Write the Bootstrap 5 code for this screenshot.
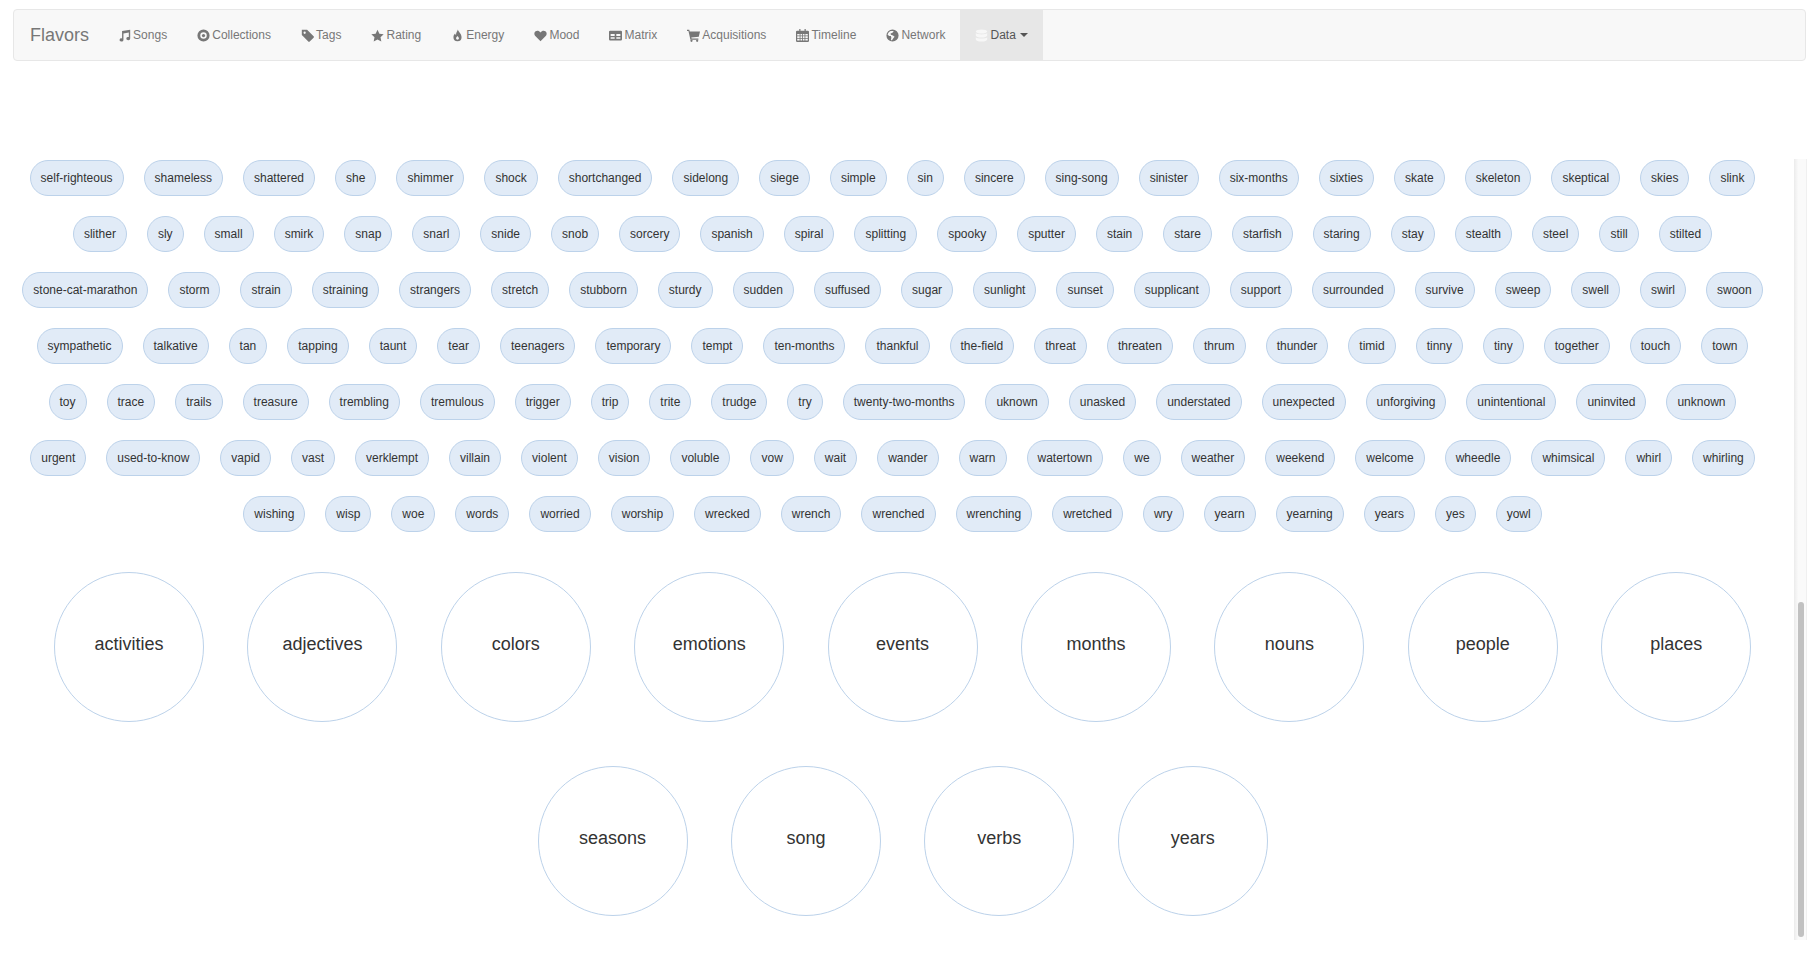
<!DOCTYPE html>
<html lang="en">
<head>
  <meta charset="UTF-8">
  <title>Flavors</title>
  <link href="https://cdn.jsdelivr.net/npm/bootstrap@5.3.3/dist/css/bootstrap.min.css" rel="stylesheet">
  <style>
    html, body {
      height: 100%;
      overflow: hidden;
    }
    body {
      background: #fff;
      color: #333;
      font-family: "Liberation Sans", Arial, sans-serif;
      font-size: 12px;
    }
    .top-bar {
      --bs-navbar-nav-link-padding-x: 15px;
      height: 52px;
      margin: 9px 9px 0 13px;
      padding: 0;
      background: #f8f8f8;
      border: 1px solid #e7e7e7;
      border-radius: 4px;
    }
    .top-bar .navbar-brand {
      color: #777;
      font-size: 18px;
      line-height: 20px;
      margin: 0;
      padding: 15px 14px 15px 16px;
    }
    .top-bar .nav-link {
      color: #777;
      font-size: 12px;
      line-height: 20px;
      padding-top: 15px;
      padding-bottom: 15px;
      display: flex;
      align-items: center;
      height: 50px;
    }
    .top-bar .nav-link svg {
      width: 13px;
      height: 13px;
      margin-right: 2.1px;
      fill: currentColor;
    }
    .top-bar .nav-link.open-item {
      background: #e7e7e7;
      color: #555;
    }
    .top-bar .nav-link.open-item svg {
      fill: #f7f7f7;
    }
    .top-bar .dropdown-toggle::after {
      margin-left: 4px;
      border-top-width: 4px;
      border-left-width: 4px;
      border-right-width: 4px;
      vertical-align: middle;
    }
    .scroll-pane {
      height: 781px;
      margin: 98px 8px 0 0;
    }
    .pane-body {
      overflow: hidden;
    }
    .pill-cloud {
      width: 1761px;
      margin: 1px 0 0 12px;
      column-gap: 20px;
      row-gap: 20px;
    }
    .flavor-pill {
      height: 36px;
      padding: 0 10px;
      line-height: 34px;
      background: #e1ebf7;
      border: 1px solid #bcd2ea;
      border-radius: 18px;
      white-space: nowrap;
    }
    .group-cloud {
      margin: 40px 0 0 11px;
      column-gap: 43.4px;
      row-gap: 44px;
    }
    .group-circle {
      width: 150px;
      height: 150px;
      padding-bottom: 5px;
      border: 1px solid #bcd2ea;
      border-radius: 50%;
      font-size: 18px;
    }
    .scroll-track {
      width: 15px;
      padding: 0 2px 3px 3px;
      background: linear-gradient(90deg, #efefef, #fafafa 30%, #fafafa);
      border-left: 1px solid #ededed;
      border-right: 1px solid #f0f0f0;
    }
    .scroll-thumb {
      height: 335px;
      background: #c1c1c1;
      border-radius: 4px;
    }
  </style>
</head>
<body>
<nav class="navbar navbar-expand top-bar">
  <a class="navbar-brand" href="#">Flavors</a>
  <ul class="navbar-nav">
    <li class="nav-item"><a class="nav-link" href="#"><svg viewBox="0 0 16 16"><path d="M5 2.600 15 .8v11a2.400 2 0 1 1-1.700-1.900V4.300L6.700 5.500V13.500a2.400 2 0 1 1-1.700-1.900Z"/></svg>Songs</a></li>
    <li class="nav-item"><a class="nav-link" href="#"><svg viewBox="0 0 16 16"><path fill-rule="evenodd" d="M8 .5a7.500 7.500 0 1 1 0 15 7.500 7.500 0 0 1 0-15ZM8 4a4 4 0 1 0 0 8 4 4 0 0 0 0-8Z"/><circle cx="8" cy="8" r="2"/></svg>Collections</a></li>
    <li class="nav-item"><a class="nav-link" href="#"><svg viewBox="0 0 16 16"><path fill-rule="evenodd" d="M1 1h6.500L15.500 9a1.200 1.200 0 0 1 0 1.700L10.700 15.500a1.200 1.200 0 0 1-1.700 0L1 7.500ZM4.500 3.200a1.400 1.400 0 1 0 0 2.800 1.400 1.400 0 0 0 0-2.800Z"/></svg>Tags</a></li>
    <li class="nav-item"><a class="nav-link" href="#"><svg viewBox="0 0 16 16"><path d="m8 .8 2.300 4.900 5.300.7-3.900 3.700 1 5.300L8 12.900l-4.700 2.500 1-5.300L.4 6.400l5.300-.7Z"/></svg>Rating</a></li>
    <li class="nav-item"><a class="nav-link" href="#"><svg viewBox="0 0 16 16"><path fill-rule="evenodd" d="M8.500.5c.6 3 4.500 5 4.500 9.500a5 5 0 0 1-10 0c0-2 1-3.200 2-4.500.2 1 .6 1.600 1.200 2C6 5 7.500 3 8.500.5ZM8 8.500c-.5 1-1.800 1.600-1.800 3a1.800 1.800 0 0 0 3.600 0c0-1.400-1.300-2-1.800-3Z"/></svg>Energy</a></li>
    <li class="nav-item"><a class="nav-link" href="#"><svg viewBox="0 0 16 16"><path d="M8 15 1.600 8.600C-.2 6.800.2 3.900 2 2.700c1.900-1.200 4.300-.7 6 1.500 1.700-2.200 4.100-2.700 6-1.500 1.800 1.200 2.200 4.100.4 5.900Z"/></svg>Mood</a></li>
    <li class="nav-item"><a class="nav-link" href="#"><svg viewBox="0 0 16 16"><path fill-rule="evenodd" d="M1.500 2h13A1.500 1.500 0 0 1 16 3.500v9a1.500 1.500 0 0 1-1.500 1.500h-13A1.500 1.500 0 0 1 0 12.500v-9A1.500 1.500 0 0 1 1.500 2ZM2 6v2.500h5V6Zm7 0v2.500h5V6ZM2 10v2h5v-2Zm7 0v2h5v-2Z"/></svg>Matrix</a></li>
    <li class="nav-item"><a class="nav-link" href="#"><svg viewBox="0 0 16 16"><path d="M0 1h2.800l.5 2H16l-1.500 6.500-9.200 1 .3 1.300H14v1.400H4.200L1.800 2.400H0Z"/><circle cx="5.500" cy="14.500" r="1.400"/><circle cx="12.500" cy="14.500" r="1.400"/></svg>Acquisitions</a></li>
    <li class="nav-item"><a class="nav-link" href="#"><svg viewBox="0 0 16 16"><path fill-rule="evenodd" d="M4 0h1.500v2h5V0H12v2h2.500A1.500 1.500 0 0 1 16 3.500v11a1.500 1.500 0 0 1-1.500 1.500h-13A1.500 1.500 0 0 1 0 14.500v-11A1.500 1.500 0 0 1 1.500 2H4ZM1.500 6v2h3V6Zm4 0v2h2V6Zm3 0v2h2V6Zm3 0v2h3V6Zm-10 3v2h3V9Zm4 0v2h2V9Zm3 0v2h2V9Zm3 0v2h3V9Zm-10 3v2h3v-2Zm4 0v2h2v-2Zm3 0v2h2v-2Zm3 0v2h3v-2Z"/></svg>Timeline</a></li>
    <li class="nav-item"><a class="nav-link" href="#"><svg viewBox="0 0 16 16"><path fill-rule="evenodd" d="M8 .5a7.500 7.500 0 1 1 0 15 7.500 7.500 0 0 1 0-15ZM5 2.800C3.400 3.700 2.300 5.300 2 7.200l2 1.300 2 .2.600 2-.6 2.500 1.200.8 2-3 1.400-1.500-2-1.500L6 7l-.4-1.500L8 4.500 9.500 2.600C8 2.200 6.300 2.200 5 2.800Z"/></svg>Network</a></li>
    <li class="nav-item"><a class="nav-link open-item dropdown-toggle" href="#"><svg viewBox="0 0 16 16"><path d="M8 .5c3.900 0 7 1 7 2.500S11.900 5.500 8 5.500 1 4.500 1 3 4.100.5 8 .5ZM1 5c1.200 1.200 4 1.800 7 1.800S13.800 6.200 15 5v3c0 1.500-3.100 2.500-7 2.500S1 9.500 1 8Zm0 5c1.200 1.200 4 1.800 7 1.800s5.800-.6 7-1.800v3c0 1.500-3.100 2.500-7 2.500S1 14.500 1 13Z"/></svg>Data</a></li>
  </ul>
</nav>

<div class="d-flex scroll-pane">
  <div class="flex-grow-1 pane-body">
    <div class="d-flex flex-wrap justify-content-center pill-cloud">
      <span class="flavor-pill">self-righteous</span><span class="flavor-pill">shameless</span><span class="flavor-pill">shattered</span><span class="flavor-pill">she</span><span class="flavor-pill">shimmer</span><span class="flavor-pill">shock</span><span class="flavor-pill">shortchanged</span><span class="flavor-pill">sidelong</span><span class="flavor-pill">siege</span><span class="flavor-pill">simple</span><span class="flavor-pill">sin</span><span class="flavor-pill">sincere</span><span class="flavor-pill">sing-song</span><span class="flavor-pill">sinister</span><span class="flavor-pill">six-months</span><span class="flavor-pill">sixties</span><span class="flavor-pill">skate</span><span class="flavor-pill">skeleton</span><span class="flavor-pill">skeptical</span><span class="flavor-pill">skies</span><span class="flavor-pill">slink</span>
      <span class="flavor-pill">slither</span><span class="flavor-pill">sly</span><span class="flavor-pill">small</span><span class="flavor-pill">smirk</span><span class="flavor-pill">snap</span><span class="flavor-pill">snarl</span><span class="flavor-pill">snide</span><span class="flavor-pill">snob</span><span class="flavor-pill">sorcery</span><span class="flavor-pill">spanish</span><span class="flavor-pill">spiral</span><span class="flavor-pill">splitting</span><span class="flavor-pill">spooky</span><span class="flavor-pill">sputter</span><span class="flavor-pill">stain</span><span class="flavor-pill">stare</span><span class="flavor-pill">starfish</span><span class="flavor-pill">staring</span><span class="flavor-pill">stay</span><span class="flavor-pill">stealth</span><span class="flavor-pill">steel</span><span class="flavor-pill">still</span><span class="flavor-pill">stilted</span>
      <span class="flavor-pill">stone-cat-marathon</span><span class="flavor-pill">storm</span><span class="flavor-pill">strain</span><span class="flavor-pill">straining</span><span class="flavor-pill">strangers</span><span class="flavor-pill">stretch</span><span class="flavor-pill">stubborn</span><span class="flavor-pill">sturdy</span><span class="flavor-pill">sudden</span><span class="flavor-pill">suffused</span><span class="flavor-pill">sugar</span><span class="flavor-pill">sunlight</span><span class="flavor-pill">sunset</span><span class="flavor-pill">supplicant</span><span class="flavor-pill">support</span><span class="flavor-pill">surrounded</span><span class="flavor-pill">survive</span><span class="flavor-pill">sweep</span><span class="flavor-pill">swell</span><span class="flavor-pill">swirl</span><span class="flavor-pill">swoon</span>
      <span class="flavor-pill">sympathetic</span><span class="flavor-pill">talkative</span><span class="flavor-pill">tan</span><span class="flavor-pill">tapping</span><span class="flavor-pill">taunt</span><span class="flavor-pill">tear</span><span class="flavor-pill">teenagers</span><span class="flavor-pill">temporary</span><span class="flavor-pill">tempt</span><span class="flavor-pill">ten-months</span><span class="flavor-pill">thankful</span><span class="flavor-pill">the-field</span><span class="flavor-pill">threat</span><span class="flavor-pill">threaten</span><span class="flavor-pill">thrum</span><span class="flavor-pill">thunder</span><span class="flavor-pill">timid</span><span class="flavor-pill">tinny</span><span class="flavor-pill">tiny</span><span class="flavor-pill">together</span><span class="flavor-pill">touch</span><span class="flavor-pill">town</span>
      <span class="flavor-pill">toy</span><span class="flavor-pill">trace</span><span class="flavor-pill">trails</span><span class="flavor-pill">treasure</span><span class="flavor-pill">trembling</span><span class="flavor-pill">tremulous</span><span class="flavor-pill">trigger</span><span class="flavor-pill">trip</span><span class="flavor-pill">trite</span><span class="flavor-pill">trudge</span><span class="flavor-pill">try</span><span class="flavor-pill">twenty-two-months</span><span class="flavor-pill">uknown</span><span class="flavor-pill">unasked</span><span class="flavor-pill">understated</span><span class="flavor-pill">unexpected</span><span class="flavor-pill">unforgiving</span><span class="flavor-pill">unintentional</span><span class="flavor-pill">uninvited</span><span class="flavor-pill">unknown</span>
      <span class="flavor-pill">urgent</span><span class="flavor-pill">used-to-know</span><span class="flavor-pill">vapid</span><span class="flavor-pill">vast</span><span class="flavor-pill">verklempt</span><span class="flavor-pill">villain</span><span class="flavor-pill">violent</span><span class="flavor-pill">vision</span><span class="flavor-pill">voluble</span><span class="flavor-pill">vow</span><span class="flavor-pill">wait</span><span class="flavor-pill">wander</span><span class="flavor-pill">warn</span><span class="flavor-pill">watertown</span><span class="flavor-pill">we</span><span class="flavor-pill">weather</span><span class="flavor-pill">weekend</span><span class="flavor-pill">welcome</span><span class="flavor-pill">wheedle</span><span class="flavor-pill">whimsical</span><span class="flavor-pill">whirl</span><span class="flavor-pill">whirling</span>
      <span class="flavor-pill">wishing</span><span class="flavor-pill">wisp</span><span class="flavor-pill">woe</span><span class="flavor-pill">words</span><span class="flavor-pill">worried</span><span class="flavor-pill">worship</span><span class="flavor-pill">wrecked</span><span class="flavor-pill">wrench</span><span class="flavor-pill">wrenched</span><span class="flavor-pill">wrenching</span><span class="flavor-pill">wretched</span><span class="flavor-pill">wry</span><span class="flavor-pill">yearn</span><span class="flavor-pill">yearning</span><span class="flavor-pill">years</span><span class="flavor-pill">yes</span><span class="flavor-pill">yowl</span>
    </div>
    <div class="d-flex flex-wrap justify-content-center group-cloud">
      <div class="group-circle d-flex align-items-center justify-content-center">activities</div>
      <div class="group-circle d-flex align-items-center justify-content-center">adjectives</div>
      <div class="group-circle d-flex align-items-center justify-content-center">colors</div>
      <div class="group-circle d-flex align-items-center justify-content-center">emotions</div>
      <div class="group-circle d-flex align-items-center justify-content-center">events</div>
      <div class="group-circle d-flex align-items-center justify-content-center">months</div>
      <div class="group-circle d-flex align-items-center justify-content-center">nouns</div>
      <div class="group-circle d-flex align-items-center justify-content-center">people</div>
      <div class="group-circle d-flex align-items-center justify-content-center">places</div>
      <div class="group-circle d-flex align-items-center justify-content-center">seasons</div>
      <div class="group-circle d-flex align-items-center justify-content-center">song</div>
      <div class="group-circle d-flex align-items-center justify-content-center">verbs</div>
      <div class="group-circle d-flex align-items-center justify-content-center">years</div>
    </div>
  </div>
  <div class="scroll-track d-flex flex-column justify-content-end">
    <div class="scroll-thumb"></div>
  </div>
</div>
<script src="https://cdn.jsdelivr.net/npm/bootstrap@5.3.3/dist/js/bootstrap.bundle.min.js"></script>
</body>
</html>
